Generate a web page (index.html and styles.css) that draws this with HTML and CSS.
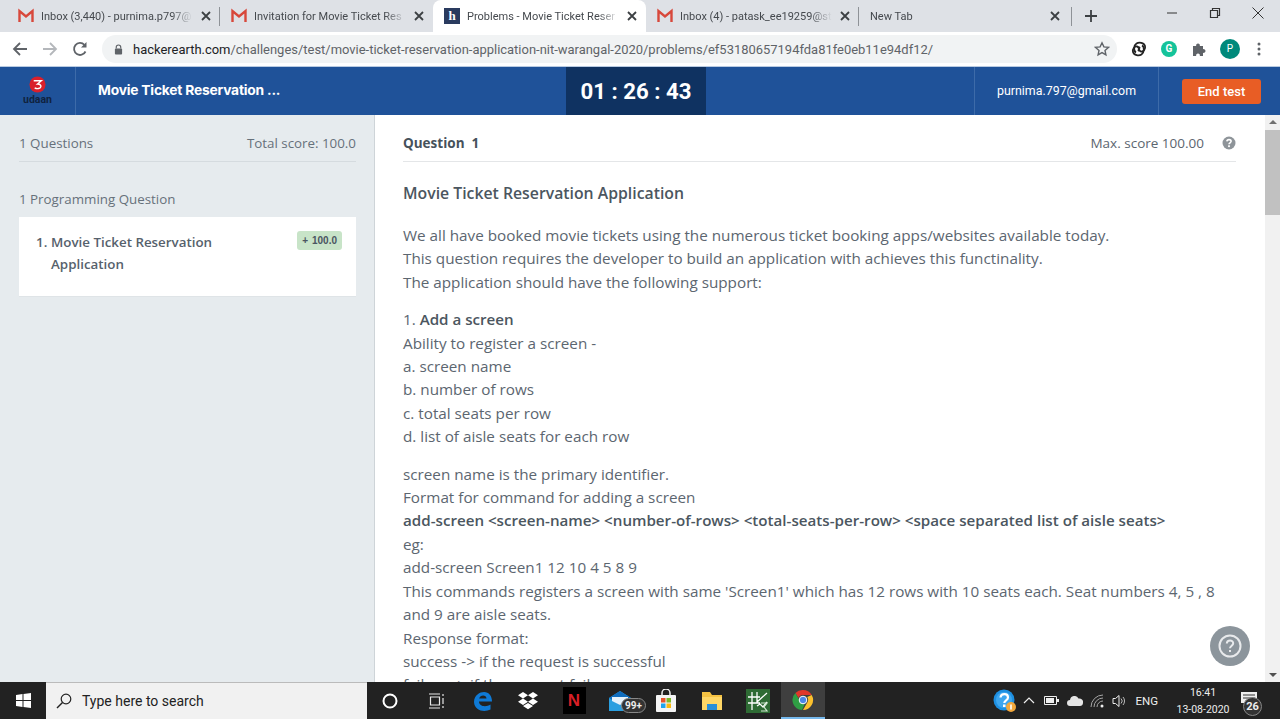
FILE: index.html
```html
<!DOCTYPE html>
<html lang="en">
<head>
    <meta charset="UTF-8">
    <title>Problems - Movie Ticket Reservation Application</title>
    <link rel="stylesheet" href="styles.css">
</head>
<body>
    <svg class="defs" width="0" height="0">
        <symbol id="gmail" viewBox="0 0 16 16">
            <path d="M1.500 14V3l6.500 5.500L14.500 3v11" fill="none" stroke="#d8483b" stroke-width="2.400"/>
        </symbol>
        <symbol id="close" viewBox="0 0 10 10">
            <path d="M1 1l8 8M9 1l-8 8" fill="none" stroke="#3c4043" stroke-width="1.800"/>
        </symbol>
    </svg>

    <!-- Browser tabs -->
    <div class="tabstrip">
        <div class="tab">
            <svg class="favicon"><use href="#gmail"/></svg>
            <span class="tab-title">Inbox (3,440) - purnima.p797@</span>
            <svg class="tab-close"><use href="#close"/></svg>
        </div>
        <div class="tab no-sep">
            <svg class="favicon"><use href="#gmail"/></svg>
            <span class="tab-title">Invitation for Movie Ticket Res</span>
            <svg class="tab-close"><use href="#close"/></svg>
        </div>
        <div class="tab active">
            <span class="favicon he-icon">h</span>
            <span class="tab-title">Problems - Movie Ticket Reser</span>
            <svg class="tab-close"><use href="#close"/></svg>
        </div>
        <div class="tab">
            <svg class="favicon"><use href="#gmail"/></svg>
            <span class="tab-title">Inbox (4) - patask_ee19259@st</span>
            <svg class="tab-close"><use href="#close"/></svg>
        </div>
        <div class="tab new-tab">
            <span class="tab-title">New Tab</span>
            <svg class="tab-close"><use href="#close"/></svg>
        </div>
        <svg class="plus" width="14" height="14" viewBox="0 0 14 14"><path d="M7 1v12M1 7h12" stroke="#3c4043" stroke-width="1.800"/></svg>
        <div class="window-btns">
            <svg width="12" height="12" viewBox="0 0 12 12"><path d="M1 6h10" stroke="#333" stroke-width="1"/></svg>
            <svg width="12" height="12" viewBox="0 0 12 12"><path d="M1.500 3.500h7v7h-7zM3.500 3.500v-2h7v7h-2" fill="none" stroke="#333" stroke-width="1.200"/></svg>
            <svg width="12" height="12" viewBox="0 0 12 12"><path d="M.5.5l11 11M11.500.5l-11 11" stroke="#333" stroke-width="1"/></svg>
        </div>
    </div>

    <!-- Address bar -->
    <div class="toolbar">
        <svg class="nav-icon" viewBox="0 0 16 16"><path d="M15 8H2M8 2L2 8l6 6" fill="none" stroke="#5f6368" stroke-width="1.800"/></svg>
        <svg class="nav-icon" viewBox="0 0 16 16"><path d="M1 8h13M8 2l6 6-6 6" fill="none" stroke="#b4b7bb" stroke-width="1.800"/></svg>
        <svg class="nav-icon" viewBox="0 0 16 16"><path d="M13.500 10.500A6 6 0 1 1 12.400 3.800" fill="none" stroke="#5f6368" stroke-width="1.800"/><path d="M14.500 1v5.500H9z" fill="#5f6368"/></svg>
        <div class="omnibox">
            <svg class="lock" viewBox="0 0 10 12"><path d="M2.500 5V3.500a2.500 2.500 0 0 1 5 0V5" fill="none" stroke="#5f6368" stroke-width="1.300"/><rect x="1" y="5" width="8" height="6.500" rx="1" fill="#5f6368"/></svg>
            <span class="url"><b>hackerearth.com</b>/challenges/test/movie-ticket-reservation-application-nit-warangal-2020/problems/ef53180657194fda81fe0eb11e94df12/</span>
            <svg class="star" viewBox="0 0 16 16"><path d="M8 1.800l1.900 4.100 4.500.5-3.400 3 .9 4.400L8 11.600l-3.900 2.200.9-4.400-3.400-3 4.500-.5z" fill="none" stroke="#5f6368" stroke-width="1.400"/></svg>
        </div>
        <div class="ext-icons">
            <svg width="16" height="16" viewBox="0 0 16 16"><path d="M5 11.500C2 10 3 4 5.500 2.500 8 1 13 1.500 14 5c.8 3-1.500 6-4 5.500-2-.4-2.500-3-1-4.500" fill="none" stroke="#222" stroke-width="1.800"/><path d="M11 4.500C14 6 13 12 10.500 13.500 8 15 3 14.500 2 11c-.8-3 1.500-6 4-5.500 2 .4 2.500 3 1 4.500" fill="none" stroke="#222" stroke-width="1.800"/></svg>
            <span class="grammarly">G</span>
            <svg width="16" height="16" viewBox="0 0 16 16"><path d="M2 5h3.200a1.900 1.900 0 1 1 3.600 0H12v3.200a1.900 1.900 0 1 1 0 3.600V15H8.800a1.900 1.900 0 1 0-3.600 0H2z" fill="#5f6368"/></svg>
            <span class="avatar">P</span>
            <svg class="menu-dots" width="4" height="14" viewBox="0 0 4 14"><circle cx="2" cy="2" r="1.500" fill="#5f6368"/><circle cx="2" cy="7" r="1.500" fill="#5f6368"/><circle cx="2" cy="12" r="1.500" fill="#5f6368"/></svg>
        </div>
    </div>

    <!-- Test header -->
    <header class="test-header">
        <div class="logo">
            <svg width="17" height="17" viewBox="0 0 18 18"><circle cx="9" cy="9" r="8.500" fill="#d9202c"/><path d="M5 5h8L9 8.500c3 0 4 1.500 3.500 3-.6 2-4 2.500-6.500 1" fill="none" stroke="#fff" stroke-width="1.500"/></svg>
            <span class="logo-name">udaan</span>
        </div>
        <div class="test-name">Movie Ticket Reservation ...</div>
        <div class="timer">01 : 26 : 43</div>
        <div class="user-email">purnima.797@gmail.com</div>
        <div class="end-wrap"><button class="end-btn">End test</button></div>
    </header>

    <main class="main">
        <aside class="sidebar">
            <div class="side-head">
                <span>1 Questions</span>
                <span>Total score: 100.0</span>
            </div>
            <div class="side-group">1 Programming Question</div>
            <div class="q-card">
                <span class="q-num">1.</span>
                <span class="q-name">Movie Ticket Reservation Application</span>
                <span class="q-badge"><i>+</i> 100.0</span>
            </div>
        </aside>

        <section class="content">
            <div class="q-head">
                <strong>Question&nbsp; 1</strong>
                <span class="max-score">Max. score 100.00
                    <svg width="14" height="14" viewBox="0 0 14 14"><circle cx="7" cy="7" r="6.500" fill="#8e9499"/><path d="M4.900 5.400C5 3 9.100 3 9.100 5.300c0 1.500-2.100 1.500-2.100 3" fill="none" stroke="#fff" stroke-width="1.600"/><rect x="6.100" y="9.300" width="1.800" height="1.800" fill="#fff"/></svg>
                </span>
            </div>
            <h1 class="q-title">Movie Ticket Reservation Application</h1>
            <p>We all have booked movie tickets using the numerous ticket booking apps/websites available today.<br>
            This question requires the developer to build an application with achieves this functinality.<br>
            The application should have the following support:</p>
            <p>1. <b>Add a screen</b><br>
            Ability to register a screen -<br>
            a. screen name<br>
            b. number of rows<br>
            c. total seats per row<br>
            d. list of aisle seats for each row</p>
            <p>screen name is the primary identifier.<br>
            Format for command for adding a screen<br>
            <b>add-screen &lt;screen-name&gt; &lt;number-of-rows&gt; &lt;total-seats-per-row&gt; &lt;space separated list of aisle seats&gt;</b><br>
            eg:<br>
            add-screen Screen1 12 10 4 5 8 9<br>
            This commands registers a screen with same 'Screen1' which has 12 rows with 10 seats each. Seat numbers 4, 5 , 8 and 9 are aisle seats.<br>
            Response format:<br>
            success -&gt; if the request is successful<br>
            failure -&gt; if the request fails</p>
        </section>

        <div class="scrollbar">
            <span class="arrow-up"></span>
            <span class="thumb"></span>
            <span class="arrow-down"></span>
        </div>

        <button class="help-fab">
            <svg width="24" height="24" viewBox="0 0 24 24"><circle cx="12" cy="12" r="10.500" fill="none" stroke="#e8eaec" stroke-width="2"/><path d="M8.800 9.500c.2-4 6.400-4 6.400-.2 0 2.400-3.200 2.400-3.200 5" fill="none" stroke="#e8eaec" stroke-width="2"/><rect x="11" y="16" width="2" height="2" fill="#e8eaec"/></svg>
        </button>
    </main>

    <!-- Windows taskbar -->
    <footer class="taskbar">
        <div class="start">
            <svg width="15" height="15" viewBox="0 0 15 15"><path d="M0 2l6.500-1v6H0zM7.500.9L15 0v7H7.500zM0 8h6.500v6L0 13zM7.500 8H15v7l-7.500-1z" fill="#fff"/></svg>
        </div>
        <div class="search">
            <svg width="16" height="16" viewBox="0 0 16 16"><circle cx="10" cy="6" r="4.800" fill="none" stroke="#222" stroke-width="1.200"/><path d="M6.500 9.500L1 15" stroke="#222" stroke-width="1.400"/></svg>
            <span>Type here to search</span>
        </div>
        <div class="task-icons">
            <div class="task-slot"><svg width="16" height="16" viewBox="0 0 16 16"><circle cx="8" cy="8" r="6.500" fill="none" stroke="#fff" stroke-width="2"/></svg></div>
            <div class="task-slot"><svg width="16" height="16" viewBox="0 0 16 16"><path d="M1 1h11M1 15h11M11.500 4h-9v8h9zM15 1v2M15 5v6M15 13v2" fill="none" stroke="#e8e8e8" stroke-width="1.200"/></svg></div>
            <div class="task-slot"><svg width="22" height="22" viewBox="0 0 22 22"><path d="M3 12C3 5 9 2 13 2c5 0 8 4 8 9.500H8c0 5 7 6 11.500 3v5c-6 3-16 1.500-16.500-7.500zM8.200 8.500h7.300c0-4-6.500-4-7.300 0z" fill="#0f7ad6"/></svg></div>
            <div class="task-slot"><svg width="22" height="20" viewBox="0 0 22 20"><path d="M6 1l5 3.200-5 3.200L1 4.200zM16 1l5 3.200-5 3.200-5-3.200zM6 7.600l5 3.200-5 3.200-5-3.200zM16 7.600l5 3.200-5 3.200-5-3.200zM6 15l5-3.100 5 3.100-5 3.200z" fill="#fff"/></svg></div>
            <div class="task-slot"><span class="netflix">N</span></div>
            <div class="task-slot">
                <svg width="24" height="22" viewBox="0 0 24 22"><path d="M1 8l11-7 11 7v13H1z" fill="#2a9fe0"/><path d="M1 8l11 7 11-7-11-7z" fill="#0f6cbd"/><path d="M4 7h16v4l-8 4-8-4z" fill="#e6f2fb"/></svg>
                <span class="badge-pill">99+</span>
            </div>
            <div class="task-slot"><svg width="22" height="24" viewBox="0 0 22 24"><path d="M7 6V4a4 4 0 0 1 8 0v2" fill="none" stroke="#eee" stroke-width="1.500"/><rect x="1" y="6" width="20" height="17" rx="1" fill="#f5f5f5"/><rect x="6" y="9" width="4.500" height="4.500" fill="#e8532b"/><rect x="11.500" y="9" width="4.500" height="4.500" fill="#7db928"/><rect x="6" y="14.500" width="4.500" height="4.500" fill="#20a4ee"/><rect x="11.500" y="14.500" width="4.500" height="4.500" fill="#fbb911"/></svg></div>
            <div class="task-slot"><svg width="22" height="20" viewBox="0 0 22 20"><path d="M1 1h8l2 3h10v15H1z" fill="#f5c242"/><path d="M1 6h20v13H1z" fill="#ffd766"/><path d="M6 13h10v6H6z" fill="#2a8fd8"/></svg></div>
            <div class="task-slot"><svg width="24" height="24" viewBox="0 0 24 24"><rect width="24" height="24" fill="#2e6b34"/><path d="M2 8h12M2 14h12M6 3v18M11 3v10l10-9M11 17l3-2 3 3 4-5" fill="none" stroke="#fff" stroke-width="1.300"/><path d="M15 14h6l-3 4 3 4h-6" fill="none" stroke="#cfe8d0" stroke-width="1.200"/></svg></div>
            <div class="task-slot running"><svg width="22" height="22" viewBox="0 0 22 22"><path d="M11 1a10 10 0 0 1 8.700 5H11a5 5 0 0 0-4.600 3L3.400 4A10 10 0 0 1 11 1z" fill="#e0372b"/><path d="M19.700 6A10 10 0 0 1 11 21l4.300-7.500A5 5 0 0 0 15.200 8z" fill="#fbc02d"/><path d="M3.400 4l4.300 7.500a5 5 0 0 0 5.300 3.100L10 21A10 10 0 0 1 3.400 4z" fill="#2f9e44"/><circle cx="11" cy="11" r="3.800" fill="#4a86e8" stroke="#fff" stroke-width="1"/></svg></div>
        </div>
        <div class="tray">
            <div class="tray-help"><svg width="24" height="24" viewBox="0 0 24 24"><circle cx="11" cy="11" r="10.500" fill="#1d8fe1"/><circle cx="11" cy="11" r="8" fill="#3ea6ee"/><path d="M7.500 8.500C8 4 15 4 15 8.500c0 3-3.700 2.700-3.700 5.500" fill="none" stroke="#fff" stroke-width="2.200"/><rect x="10" y="15.500" width="2.500" height="2.500" fill="#fff"/><circle cx="18" cy="18" r="5" fill="#f3a83c"/><rect x="17.200" y="15.500" width="1.600" height="5" fill="#fff"/></svg></div>
            <svg class="t-caret" width="12" height="7" viewBox="0 0 12 7"><path d="M1 6l5-5 5 5" fill="none" stroke="#eee" stroke-width="1.200"/></svg>
            <svg class="t-batt" width="15" height="9" viewBox="0 0 15 9"><path d="M.5.500h12v8H.5z" fill="none" stroke="#eee"/><rect x="2" y="2" width="8" height="5" fill="#eee"/><rect x="13" y="3" width="2" height="3" fill="#eee"/></svg>
            <svg class="t-cloud" width="16" height="10" viewBox="0 0 16 10"><path d="M3 10a3 3 0 0 1 0-6 4.500 4.500 0 0 1 8.500-1.500A3.800 3.800 0 0 1 16 7c0 2-1.500 3-3 3z" fill="#e4e4e4"/></svg>
            <svg class="t-wifi" width="15" height="14" viewBox="0 0 15 14"><path d="M1 13A12 12 0 0 1 13 1M4 13a9 9 0 0 1 9-9M7 13a6 6 0 0 1 6-6" fill="none" stroke="#a5a5a5" stroke-width="1"/><circle cx="12" cy="12" r="1.500" fill="#eee"/></svg>
            <svg class="t-vol" width="15" height="14" viewBox="0 0 15 14"><path d="M1 4.500h2.500L7 1.500v11l-3.500-3H1z" fill="none" stroke="#eee"/><path d="M9 4.500a3.500 3.500 0 0 1 0 5M11 3a6 6 0 0 1 0 8" fill="none" stroke="#bbb"/></svg>
            <span class="t-lang">ENG</span>
            <div class="t-clock"><span>16:41</span><span>13-08-2020</span></div>
            <div class="t-notif">
                <svg width="18" height="16" viewBox="0 0 18 16"><path d="M1 1h16v11H1z" fill="#eee"/><path d="M3 4h12M3 7h12" stroke="#333"/></svg>
                <span class="notif-count">26</span>
            </div>
        </div>
    </footer>
</body>
</html>
```

FILE: styles.css
```css
/* Basic page */
* {
    box-sizing: border-box;
}

body {
    margin: 0;
    height: 719px;
    overflow: hidden;
    display: flex;
    flex-direction: column;
    font-family: 'Open Sans', sans-serif;
    background: #fff;
}

.defs {
    position: absolute;
}

/* Tab strip */
.tabstrip {
    height: 32px;
    flex: none;
    display: flex;
    align-items: stretch;
    padding-left: 7px;
    background: #dee1e6;
    font-family: Roboto, sans-serif;
    font-size: 11px;
    color: #45494e;
}

.tab {
    width: 213px;
    display: flex;
    align-items: center;
    padding-left: 11px;
    position: relative;
}

.tab::after {
    content: "";
    position: absolute;
    right: 0;
    top: 7px;
    height: 19px;
    border-right: 1px solid #8e9297;
}

.tab.no-sep::after,
.tab.active::after {
    display: none;
}

.tab.active {
    background: #fff;
    border-radius: 8px 8px 0 0;
}

.favicon {
    width: 16px;
    height: 16px;
    flex: none;
}

.he-icon {
    background: #2a3b5f;
    color: #fff;
    font: bold 13px/15px 'Liberation Serif', serif;
    text-align: center;
}

.tab-title {
    width: 152px;
    margin-left: 7px;
    white-space: nowrap;
    overflow: hidden;
    -webkit-mask-image: linear-gradient(to right, #000 86%, transparent);
    mask-image: linear-gradient(to right, #000 86%, transparent);
}

.new-tab .tab-title {
    margin-left: 0;
}

.tab-close {
    width: 10px;
    height: 10px;
    margin-left: 8px;
    flex: none;
}

.new-tab .tab-close {
    margin-left: 28px;
}

.plus {
    align-self: center;
    margin-left: 12px;
}

.window-btns {
    margin-left: auto;
    display: flex;
    align-items: center;
    gap: 31px;
    padding: 0 16px 6px 0;
}

/* Address bar */
.toolbar {
    height: 35px;
    flex: none;
    display: flex;
    align-items: center;
    padding-left: 12px;
    gap: 14px;
    border-bottom: 1px solid #b9cbe2;
    background: #fff;
}

.nav-icon {
    width: 16px;
    height: 16px;
    flex: none;
}

.omnibox {
    width: 1015px;
    height: 28px;
    display: flex;
    align-items: center;
    padding: 0 7px 0 12px;
    border-radius: 14px;
    background: #f1f3f4;
    font-family: Roboto, sans-serif;
    font-size: 12.96px;
    color: #5f6368;
}

.lock {
    width: 9px;
    height: 11px;
    margin-right: 10px;
    flex: none;
}

.url b {
    font-weight: 400;
    color: #202124;
}

.star {
    width: 16px;
    height: 16px;
    margin-left: auto;
}

.ext-icons {
    display: flex;
    align-items: center;
    gap: 14px;
}

.grammarly {
    width: 16px;
    height: 16px;
    border-radius: 50%;
    background: #15c39a;
    color: #fff;
    font: bold 10px/16px Roboto, sans-serif;
    text-align: center;
}

.avatar {
    width: 20px;
    height: 20px;
    margin-left: -1px;
    border-radius: 50%;
    background: #00897b;
    color: #fff;
    font: 10px/20px Roboto, sans-serif;
    text-align: center;
}

.menu-dots {
    margin-left: 3px;
}

/* Test header */
.test-header {
    height: 48px;
    flex: none;
    display: flex;
    align-items: stretch;
    background: #1f5299;
    color: #fff;
}

.logo {
    width: 76px;
    flex: none;
    display: flex;
    flex-direction: column;
    align-items: center;
    padding-top: 9px;
    border-right: 1px solid #3d6ba9;
}

.logo-name {
    margin-top: 1px;
    font: bold 10.5px/12px Roboto, sans-serif;
    color: #10233f;
}

.test-name {
    width: 490px;
    padding-left: 22px;
    font: 700 13.8px/47px Inter, sans-serif;
    letter-spacing: -0.2px;
}

.timer {
    width: 140px;
    background: #0f3261;
    text-align: center;
    font: 700 22.2px/48px Roboto, sans-serif;
}

.user-email {
    margin-left: auto;
    width: 185px;
    padding-left: 22px;
    border-left: 1px solid #3d6ba9;
    border-right: 1px solid #3d6ba9;
    font: 12.4px/48px Roboto, sans-serif;
}

.end-wrap {
    width: 121px;
    display: flex;
    align-items: center;
    padding-left: 23px;
}

.end-btn {
    width: 79px;
    height: 25px;
    padding: 0;
    border: none;
    border-radius: 3px;
    background: #e85d25;
    color: #fff;
    font: 500 13px Roboto, sans-serif;
}

/* Main area */
.main {
    flex: 1;
    min-height: 0;
    display: flex;
    position: relative;
    overflow: hidden;
}

.sidebar {
    width: 375px;
    flex: none;
    padding: 0 18px 0 19px;
    background: #e6ebee;
    border-right: 1px solid #ced4d8;
    font-size: 13.35px;
    color: #66717b;
}

.side-head {
    height: 47px;
    padding-top: 18px;
    display: flex;
    justify-content: space-between;
    border-bottom: 1px solid #d5dbdf;
    line-height: 20px;
}

.side-group {
    margin-top: 27px;
    line-height: 20px;
    margin-bottom: 8px;
}

.q-card {
    height: 80px;
    padding: 14px 14px 0 17px;
    display: flex;
    align-items: flex-start;
    background: #fff;
    border-bottom: 1px solid #dfe4e7;
    font-weight: 600;
    line-height: 22px;
    color: #56616c;
}

.q-num {
    width: 15px;
    flex: none;
}

.q-name {
    width: 200px;
}

.q-badge {
    margin-left: auto;
    height: 19px;
    padding: 0 5px;
    border-radius: 3px;
    background: #c8e4c8;
    font: bold 10px/19px 'Liberation Sans', sans-serif;
    white-space: nowrap;
    color: #4a5560;
}

.q-badge i {
    font-style: normal;
    margin-right: 1px;
}

.content {
    flex: 1;
    min-width: 0;
    padding: 0 29px 0 28px;
    overflow: hidden;
    font-size: 15.25px;
    line-height: 23.4px;
    color: #5c6670;
}

.content p {
    margin: 0 0 14px;
}

.content b {
    font-size: 15.15px;
    font-weight: 600;
    color: #4b5660;
}

.q-head {
    height: 47px;
    padding-top: 18px;
    display: flex;
    justify-content: space-between;
    border-bottom: 1px solid #e4e6e8;
    font-size: 13.5px;
    line-height: 20px;
}

.q-head strong {
    font-weight: 700;
    color: #46515b;
}

.max-score {
    height: 20px;
    display: flex;
    align-items: center;
    gap: 18px;
}

.q-title {
    margin: 19px 0 19px;
    font-size: 15.8px;
    font-weight: 600;
    line-height: 24px;
    color: #4b5660;
}

.scrollbar {
    width: 15px;
    flex: none;
    display: flex;
    flex-direction: column;
    align-items: center;
    padding-top: 5px;
    background: #f1f1f1;
}

.thumb {
    width: 100%;
    height: 85px;
    margin-top: 6px;
    background: #c1c1c1;
}

.arrow-up {
    border: 4px solid transparent;
    border-top: none;
    border-bottom: 4px solid #707070;
}

.arrow-down {
    margin-top: auto;
    margin-bottom: 5px;
    border: 4px solid transparent;
    border-bottom: none;
    border-top: 4px solid #505050;
}

.help-fab {
    position: absolute;
    left: 1210px;
    top: 511px;
    width: 40px;
    height: 40px;
    padding: 0;
    display: flex;
    align-items: center;
    justify-content: center;
    border: none;
    border-radius: 50%;
    background: #8c959c;
}

/* Windows taskbar */
.taskbar {
    height: 37px;
    flex: none;
    display: flex;
    align-items: stretch;
    background: #222;
    color: #eee;
    font-family: Roboto, sans-serif;
    position: relative;
}

.start {
    width: 46px;
    display: flex;
    align-items: center;
    justify-content: center;
}

.search {
    width: 321px;
    display: flex;
    align-items: center;
    gap: 10px;
    padding-left: 10px;
    background: #f1f1f1;
    border-top: 1px solid #bbb;
    color: #222;
    font-size: 14px;
}

.task-icons {
    display: flex;
}

.task-slot {
    width: 46px;
    display: flex;
    align-items: center;
    justify-content: center;
    position: relative;
}

.task-slot.running {
    background: #3f3f3f;
    border-bottom: 2px solid #76b9ed;
    width: 44px;
}

.netflix {
    width: 23px;
    height: 27px;
    background: #000;
    color: #d81f26;
    font: bold 17px/27px 'Liberation Sans', sans-serif;
    text-align: center;
}

.badge-pill {
    position: absolute;
    left: 24px;
    top: 16px;
    padding: 0 3px;
    border: 1px solid #888;
    border-radius: 9px;
    background: #333;
    font: bold 10px/13px Roboto, sans-serif;
    color: #eee;
}

.tray {
    margin-left: auto;
    display: flex;
    align-items: center;
    padding-right: 20px;
}

.tray-help {
    width: 24px;
    height: 24px;
}

.t-caret {
    margin-left: 6px;
}

.t-batt {
    margin-left: 9px;
}

.t-cloud {
    margin-left: 8px;
}

.t-wifi {
    margin-left: 7px;
}

.t-vol {
    margin-left: 7px;
}

.t-lang {
    margin-left: 8px;
    font-size: 11.5px;
}

.t-clock {
    margin-left: 17px;
    width: 56px;
    display: flex;
    flex-direction: column;
    align-items: center;
    font-size: 10.5px;
    line-height: 17px;
}

.t-notif {
    margin-left: 9px;
    position: relative;
    width: 20px;
    height: 20px;
}

.notif-count {
    position: absolute;
    left: 3px;
    top: 6px;
    width: 19px;
    height: 19px;
    border: 1px solid #888;
    border-radius: 50%;
    background: #333;
    font: bold 11px/17px Roboto, sans-serif;
    text-align: center;
}
```
